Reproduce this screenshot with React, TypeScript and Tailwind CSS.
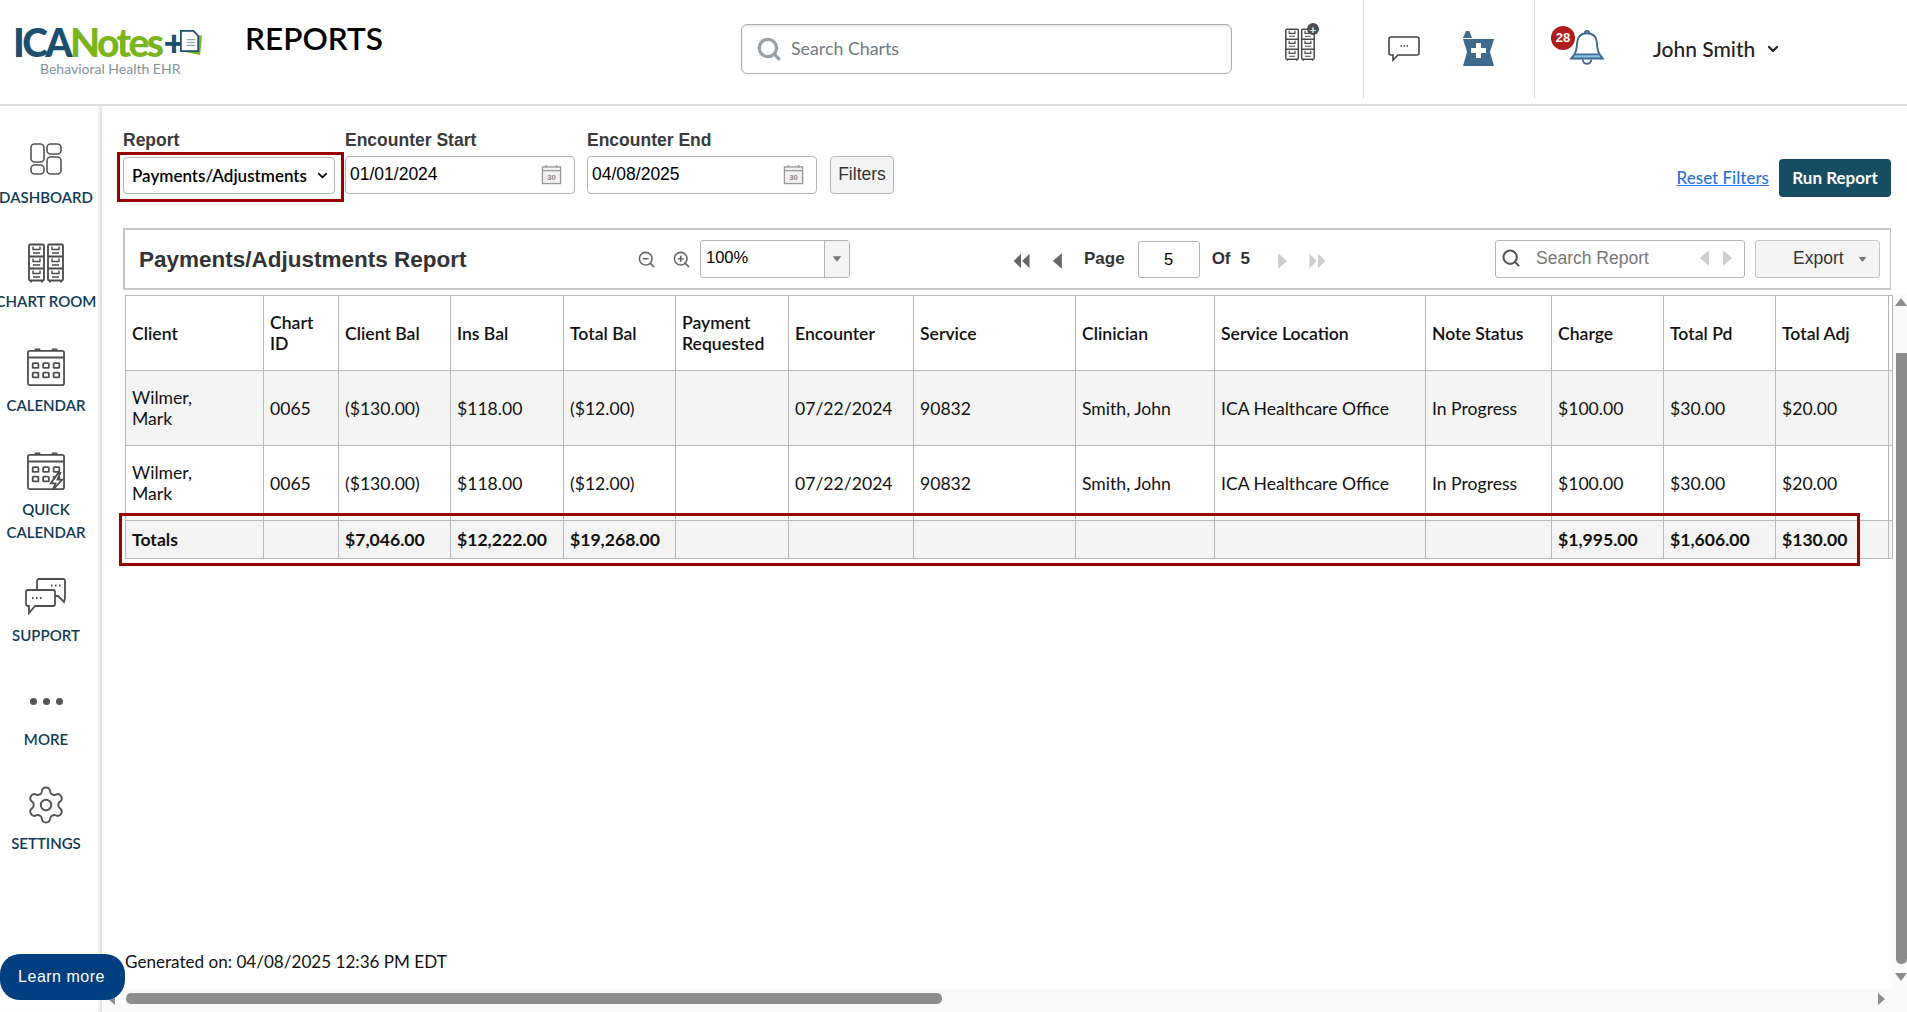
import React from 'react';
import { ChevronDown, Search, ZoomIn, ZoomOut, Settings } from 'lucide-react';

const lato = 'font-["Lato","Noto_Sans",sans-serif]';
const arial = 'font-["Liberation_Sans",Arial,sans-serif]';

const CabinetIcon = ({ className }: { className?: string }) => (
  <svg viewBox="0 0 36 40" className={className} fill="none" stroke="#4a4a4a" strokeWidth="1.8">
    {[1, 20].map((x) => (
      <g key={x}>
        <rect x={x} y="1" width="15" height="36" rx="1.2" />
        <path d={`M${x} 13h15M${x} 25h15M${x + 2} 37v2M${x + 13} 37v2`} />
        {[3, 15, 27].map((y) => (
          <path key={y} d={`M${x + 4} ${y}v3h7V${y}M${x + 4} ${y + 6.5}h7`} strokeWidth="1.4" />
        ))}
      </g>
    ))}
  </svg>
);

const CalendarIcon = ({ bolt }: { bolt?: boolean }) => (
  <svg viewBox="0 0 40 40" className="h-[38px] w-[38px]" fill="none" stroke="#4f4f4f" strokeWidth="1.9">
    <rect x="1" y="3" width="38" height="36" rx="2" />
    <path d="M1 10h38M8 1.5h6M26 1.5h6" />
    {[6, 17, 28].flatMap((x) =>
      [16, 26].map((y) => <rect key={`${x}-${y}`} x={x} y={y} width="6" height="5" rx="0.8" />)
    )}
    {bolt && <path d="M33 22l-8 11h5l-3 7 10-11h-5l3-7z" fill="#fff" />}
  </svg>
);

const DashIcon = () => (
  <svg viewBox="0 0 32 32" className="h-[32px] w-[32px]" fill="none" stroke="#555" strokeWidth="1.6">
    <rect x="1" y="1" width="13" height="18" rx="3.5" />
    <rect x="17" y="1" width="14" height="10" rx="3.5" />
    <rect x="1" y="22" width="13" height="9" rx="3.5" />
    <rect x="17" y="14" width="14" height="17" rx="3.5" />
  </svg>
);

const SupportIcon = () => (
  <svg viewBox="0 0 42 38" className="h-[38px] w-[42px]" fill="none" stroke="#4f4f4f" strokeWidth="1.8">
    <path d="M12 11V3a2 2 0 012-2h24a2 2 0 012 2v17l-1 4-6-6H30" />
    <path d="M3 12h25a2 2 0 012 2v12a2 2 0 01-2 2H10l-6 7v-7H3a2 2 0 01-2-2V14a2 2 0 012-2z" fill="#fff" />
    <path d="M26 7.5h1.5M30 7.5h1.5M34 7.5h1.5M7 20h1.5M11 20h1.5M15 20h1.5" />
  </svg>
);

const NavItem = ({ icon, label, h }: { icon: React.ReactNode; label: React.ReactNode; h: string }) => (
  <div className={`flex flex-col items-center ${h}`}>
    <div className="flex h-[44px] items-center justify-center">{icon}</div>
    <div className={`mt-[5px] whitespace-nowrap text-center text-[15px] font-semibold leading-[23px] text-[#123a55] ${lato}`}>
      {label}
    </div>
  </div>
);

const DateIcon = () => (
  <svg viewBox="0 0 22 22" className="h-[21px] w-[21px]" fill="none" stroke="#999" strokeWidth="1.4">
    <rect x="1.5" y="3" width="19" height="17.5" fill="#f2f2f2" />
    <path d="M1.5 7h19M5.5 1v3M16.5 1v3" />
    <text x="11" y="17" textAnchor="middle" fontSize="8" fontWeight="700" fill="#888" stroke="none" fontFamily="Liberation Sans">30</text>
  </svg>
);

const Triangle = ({ dir, color, className }: { dir: 'l' | 'r' | 'u' | 'd'; color: string; className?: string }) => {
  const d = { l: 'M10 1L3 7l7 6z', r: 'M4 1l7 6-7 6z', u: 'M7 3l6 8H1z', d: 'M1 3h12l-6 8z' }[dir];
  return (
    <svg viewBox="0 0 14 14" className={className ?? 'mx-[-2px] h-[18px] w-[18px]'} fill={color}>
      <path d={d} />
    </svg>
  );
};

const DoubleTriangle = ({ dir, color }: { dir: 'l' | 'r'; color: string }) => (
  <svg viewBox="0 0 18 14" className="mx-[-2px] h-[18px] w-[22px]" fill={color}>
    <path d={dir === 'l' ? 'M9 1L3 7l6 6zM16 1l-6 6 6 6z' : 'M2 1l6 6-6 6zM9 1l6 6-6 6z'} />
  </svg>
);

const colWidths = [138, 75, 112, 113, 112, 113, 125, 162, 139, 211, 126, 112, 112, 113, 4];
const heads = ['Client', 'Chart ID', 'Client Bal', 'Ins Bal', 'Total Bal', 'Payment Requested', 'Encounter', 'Service', 'Clinician', 'Service Location', 'Note Status', 'Charge', 'Total Pd', 'Total Adj', ''];
const row: React.ReactNode[] = [<>Wilmer,<br />Mark</>, '0065', '($130.00)', '$118.00', '($12.00)', '', '07/22/2024', '90832', 'Smith, John', 'ICA Healthcare Office', 'In Progress', '$100.00', '$30.00', '$20.00', ''];
const totals = ['Totals', '', '$7,046.00', '$12,222.00', '$19,268.00', '', '', '', '', '', '', '$1,995.00', '$1,606.00', '$130.00', ''];

const cell = 'border border-[#b9b9b9] overflow-hidden px-[6px] align-middle';

export default function App() {
  return (
    <div className={`relative flex h-[1012px] w-[1907px] flex-col overflow-hidden bg-white text-black ${lato}`}>
      {/* top bar */}
      <header className="flex h-[106px] shrink-0 border-b-2 border-[#dcdcdc]">
        <div className="ml-[13px] w-[232px] shrink-0 pt-[24px]">
          <div className="flex h-[36px] items-center">
            <span className={`text-[39px] font-black leading-[36px] tracking-[-2.6px] text-[#1c4f6e] ${lato}`}>ICA</span>
            <span className={`text-[39px] font-black leading-[36px] tracking-[-2.6px] text-[#7ab51d] ${lato}`}>Notes</span>
            <span className="ml-[2px] text-[36px] font-black leading-[36px] text-[#1c4f6e]">+</span>
            <svg viewBox="0 0 26 28" className="ml-[-6px] h-[27px] w-[25px]">
              <path d="M4 23l19 4 2-20-6-1z" fill="#7ab51d" />
              <path d="M3 2h13l5 5v16H3z" fill="#fff" stroke="#1c4f6e" strokeWidth="1.8" />
              <path d="M9 11h9M9 14h9M9 17h9" stroke="#8aa0ae" strokeWidth="1.2" />
            </svg>
          </div>
          <div className="ml-[27px] text-[14px] leading-[18px] text-[#87929b]">Behavioral Health EHR</div>
        </div>
        <h1 className="mt-[16px] h-[44px] w-[496px] shrink-0 text-[31.5px] font-semibold leading-[44px] text-black">REPORTS</h1>
        <div className="mt-[24px] flex h-[50px] w-[491px] shrink-0 items-center rounded-[6px] border border-[#a9b0b5] pb-[1px] pl-[14px] shadow-[inset_0_1px_3px_rgba(0,0,0,0.12)]">
          <Search className="h-[26px] w-[26px] text-[#98a0a6]" strokeWidth={3} />
          <span className="ml-[9px] text-[17.8px] text-[#6f7a82]">Search Charts</span>
        </div>
        <div className="ml-[52px] mt-[26px] w-[79px] shrink-0">
          <div className="relative h-[36px] w-[31px]">
            <CabinetIcon className="h-[34px] w-[30px] translate-x-[1px] translate-y-[2px]" />
            <span className="absolute right-[-4px] top-[-3px] flex h-[12px] w-[12px] items-center justify-center rounded-full bg-[#4d4d4d] text-[11px] font-bold leading-none text-white">+</span>
          </div>
        </div>
        <div className="flex h-[98px] w-[171px] shrink-0 border-l border-[#dcdcdc]">
          <svg viewBox="0 0 32 26" className="ml-[24px] mt-[36px] h-[26px] w-[32px]" fill="none" stroke="#444" strokeWidth="1.6">
            <path d="M3 1h26a2 2 0 012 2v14a2 2 0 01-2 2H10l-5 5v-5H3a2 2 0 01-2-2V3a2 2 0 012-2z" />
            <path d="M12.5 10h1.5M15.5 10h1.5M18.5 10h1.5" />
          </svg>
          <svg viewBox="0 0 32 36" className="ml-[42px] mt-[31px] h-[36px] w-[32px]">
            <path d="M4 0l3-1 3 8H1zM1 8h31l-4 13 4 14H1l4-14z" fill="#3e6a8e" />
            <path d="M14 12h5v5h5v5h-5v5h-5v-5H9v-5h5z" fill="#fff" />
          </svg>
        </div>
        <div className="relative h-[98px] flex-1 border-l border-[#dcdcdc]">
          <span className={`absolute left-[16px] top-[26px] flex h-[24px] w-[24px] items-center justify-center rounded-full bg-[#ae1c1c] text-[13px] font-bold text-white ${arial}`}>28</span>
          <svg viewBox="0 0 36 36" className="absolute left-[33px] top-[29px] h-[38px] w-[38px]" fill="none" stroke="#3e6a8e" strokeWidth="1.8">
            <path d="M3 28l3-4h24l3 4z" fill="#83c7ea" />
            <path d="M6 24c3-4 2-9 3-13 1-5 5-7 9-7s8 2 9 7c1 4 0 9 3 13" />
            <path d="M16 4c0-3 4-3 4 0M14 29a4 4 0 008 0" />
          </svg>
          <div className="absolute left-[118px] top-[36px] flex items-center text-[21px] font-medium leading-[26px] text-[#222]">
            John Smith
            <ChevronDown className="ml-[10px] h-[16px] w-[16px] text-[#222]" strokeWidth={3.2} />
          </div>
        </div>
      </header>

      <div className="flex min-h-0 flex-1">
        {/* left nav */}
        <aside className="w-[102px] shrink-0 pr-[10px] pt-[31px] shadow-[inset_-5px_0_4px_-3px_rgba(0,0,0,0.16)]">
          <NavItem h="h-[104px]" icon={<DashIcon />} label="DASHBOARD" />
          <NavItem h="h-[104px]" icon={<CabinetIcon className="h-[41px] w-[36px]" />} label="CHART ROOM" />
          <NavItem h="h-[104px]" icon={<CalendarIcon />} label="CALENDAR" />
          <NavItem h="h-[126px]" icon={<CalendarIcon bolt />} label={<>QUICK<br />CALENDAR</>} />
          <NavItem h="h-[104px]" icon={<SupportIcon />} label="SUPPORT" />
          <NavItem
            h="h-[104px]"
            icon={
              <div className="flex gap-[6px]">
                <span className="h-[7px] w-[7px] rounded-full bg-[#555]" />
                <span className="h-[7px] w-[7px] rounded-full bg-[#555]" />
                <span className="h-[7px] w-[7px] rounded-full bg-[#555]" />
              </div>
            }
            label="MORE"
          />
          <NavItem h="h-[104px]" icon={<Settings className="h-[42px] w-[42px] text-[#555]" strokeWidth={1.1} />} label="SETTINGS" />
        </aside>

        <main className="flex min-w-0 flex-1 flex-col">
          {/* filters */}
          <div className={`flex h-[122px] shrink-0 pl-[21px] pr-[16px] pt-[25px] text-[#333] ${arial}`}>
            <div className="w-[222px] shrink-0">
              <div className="text-[17.5px] font-bold leading-[18px] text-[#3a3a3a]">Report</div>
              <div className={`mt-[8px] flex h-[37px] w-[212px] items-center justify-between rounded-[4px] border border-[#b5b5b5] pl-[8px] pr-[4px] text-[17px] font-semibold text-black ${lato}`}>
                Payments/Adjustments
                <ChevronDown className="h-[15px] w-[15px]" strokeWidth={2.5} />
              </div>
            </div>
            <div className="w-[242px] shrink-0">
              <div className="text-[17.5px] font-bold leading-[18px] text-[#3a3a3a]">Encounter Start</div>
              <div className="mt-[7px] flex h-[38px] w-[230px] items-center justify-between rounded-[4px] border border-[#b5b5b5] pb-[2px] pl-[4px] pr-[12px] text-[17.5px] text-black">
                01/01/2024
                <DateIcon />
              </div>
            </div>
            <div className="w-[243px] shrink-0">
              <div className="text-[17.5px] font-bold leading-[18px] text-[#3a3a3a]">Encounter End</div>
              <div className="mt-[7px] flex h-[38px] w-[230px] items-center justify-between rounded-[4px] border border-[#b5b5b5] pb-[2px] pl-[4px] pr-[12px] text-[17.5px] text-black">
                04/08/2025
                <DateIcon />
              </div>
            </div>
            <div className="mt-[25px] flex h-[38px] w-[64px] items-center justify-center rounded-[4px] border border-[#b5b5b5] bg-[#f4f4f4] pb-[2px] text-[17.5px] text-[#333]">
              Filters
            </div>
            <div className={`ml-auto mt-[28px] flex h-[38px] items-center gap-[10px] ${lato}`}>
              <span className="text-[17px] font-medium text-[#2a72d8] underline">Reset Filters</span>
              <span className="flex h-[38px] w-[112px] items-center justify-center rounded-[4px] bg-[#164d63] text-[17px] font-bold text-white">Run Report</span>
            </div>
          </div>

          {/* report toolbar */}
          <div className="mr-[16px] ml-[21px] flex h-[62px] shrink-0 items-center border-2 border-[#c6c6c6] border-r">
            <div className={`ml-[14px] mt-[2px] w-[498px] shrink-0 text-[22.5px] font-bold text-[#333] ${arial}`}>Payments/Adjustments Report</div>
            <ZoomOut className="h-[19px] w-[19px] text-[#666]" strokeWidth={2} />
            <ZoomIn className="ml-[16px] h-[19px] w-[19px] text-[#666]" strokeWidth={2} />
            <div className={`ml-[9px] flex h-[38px] w-[150px] shrink-0 items-stretch rounded-[3px] border border-[#b5b5b5] text-[16.5px] ${arial}`}>
              <span className="flex flex-1 items-start pl-[5px] pt-[4px]">100%</span>
              <span className="flex w-[25px] items-center justify-center border-l border-[#b5b5b5] bg-[#f4f4f4]">
                <Triangle dir="d" color="#777" className="h-[10px] w-[10px]" />
              </span>
            </div>
            <div className="ml-[162px] mt-[4px]"><DoubleTriangle dir="l" color="#666" /></div>
            <div className="ml-[21px] mt-[4px]"><Triangle dir="l" color="#666" /></div>
            <span className={`ml-[19px] text-[17px] font-bold text-[#333] ${arial}`}>Page</span>
            <span className={`ml-[13px] flex h-[37px] w-[62px] items-center justify-center rounded-[3px] border border-[#b5b5b5] text-[16.5px] ${arial}`}>5</span>
            <span className={`ml-[12px] text-[17px] font-bold text-[#333] ${arial}`}>Of</span>
            <span className={`ml-[10px] text-[17px] font-bold text-[#333] ${arial}`}>5</span>
            <div className="ml-[25px] mt-[4px]"><Triangle dir="r" color="#ccc" /></div>
            <div className="ml-[20px] mt-[4px]"><DoubleTriangle dir="r" color="#ccc" /></div>
            <div className={`ml-[168px] flex h-[38px] w-[250px] shrink-0 items-center rounded-[3px] border border-[#b5b5b5] pb-[2px] pl-[5px] pr-[8px] text-[17.5px] text-[#777] ${arial}`}>
              <Search className="h-[20px] w-[20px] text-[#555]" strokeWidth={2.5} />
              <span className="ml-[15px] flex-1">Search Report</span>
              <Triangle dir="l" color="#ccc" />
              <Triangle dir="r" color="#ccc" className="ml-[6px] h-[18px] w-[18px]" />
            </div>
            <div className={`ml-[10px] flex h-[38px] w-[125px] shrink-0 items-center rounded-[3px] border border-[#c6c6c6] bg-[#f4f4f4] pb-[2px] pl-[37px] text-[17.5px] text-[#333] ${arial}`}>
              Export
              <Triangle dir="d" color="#777" className="ml-[14px] mt-[3px] h-[9px] w-[9px]" />
            </div>
          </div>

          <div className="flex min-h-0 flex-1">
            <div className="flex min-w-0 flex-1 flex-col">
              {/* report table */}
              <div className="relative ml-[23px] mt-[5px] w-[1767px]">
                <table className={`w-[1767px] table-fixed border-collapse text-[17.6px] leading-[21px] text-[#111] ${lato}`}>
                  <colgroup>
                    {colWidths.map((w, i) => (
                      <col key={i} style={{ width: w }} />
                    ))}
                  </colgroup>
                  <tbody>
                    <tr className="h-[75px] font-semibold">
                      {heads.map((h, i) => (
                        <td key={i} className={cell}>{h}</td>
                      ))}
                    </tr>
                    <tr className="h-[75px] bg-[#f4f4f4]">
                      {row.map((c, i) => (
                        <td key={i} className={cell}>{c}</td>
                      ))}
                    </tr>
                    <tr className="h-[75px]">
                      {row.map((c, i) => (
                        <td key={i} className={cell}>{c}</td>
                      ))}
                    </tr>
                    <tr className="h-[38px] bg-[#f4f4f4] font-bold">
                      {totals.map((c, i) => (
                        <td key={i} className={cell}>{c}</td>
                      ))}
                    </tr>
                  </tbody>
                </table>
                {/* red annotation boxes drawn over the screenshot */}
                <div className="absolute left-[-6px] top-[218px] h-[53px] w-[1741px] border-[3px] border-[#990000]" />
                <div className="absolute left-[-8px] top-[-143px] h-[50px] w-[227px] border-[3px] border-[#990000]" />
              </div>
              <div className="mt-auto pb-[15px] pl-[23px] text-[17.1px] leading-[24px] text-[#111]">Generated on: 04/08/2025 12:36 PM EDT</div>
            </div>
            {/* vertical scrollbar */}
            <div className="mt-[5px] flex w-[15px] shrink-0 flex-col items-end bg-[#fafafa]">
              <Triangle dir="u" color="#8c8c8c" className="h-[14px] w-[14px] translate-x-[1px]" />
              <div className="mt-[44px] h-[611px] w-[11px] rounded-b-[5px] bg-[#8c8c8c]" />
              <Triangle dir="d" color="#8c8c8c" className="mt-[6px] h-[14px] w-[14px] translate-x-[1px]" />
            </div>
          </div>

          {/* horizontal scrollbar */}
          <div className="flex h-[23px] shrink-0 items-center bg-[#fafafa] pb-[4px]">
            <Triangle dir="l" color="#8c8c8c" className="ml-[3px] h-[14px] w-[14px]" />
            <div className="ml-[7px] h-[11px] w-[816px] rounded-[5px] bg-[#8c8c8c]" />
            <Triangle dir="r" color="#8c8c8c" className="ml-[932px] h-[14px] w-[14px]" />
          </div>
        </main>
      </div>

      {/* floating help button */}
      <div className={`absolute bottom-[12px] left-0 flex h-[46px] w-[125px] items-center justify-center rounded-[20px] bg-[#003f7f] pr-[2px] text-[16px] tracking-[0.5px] text-white ${arial}`}>
        Learn more
      </div>
    </div>
  );
}
